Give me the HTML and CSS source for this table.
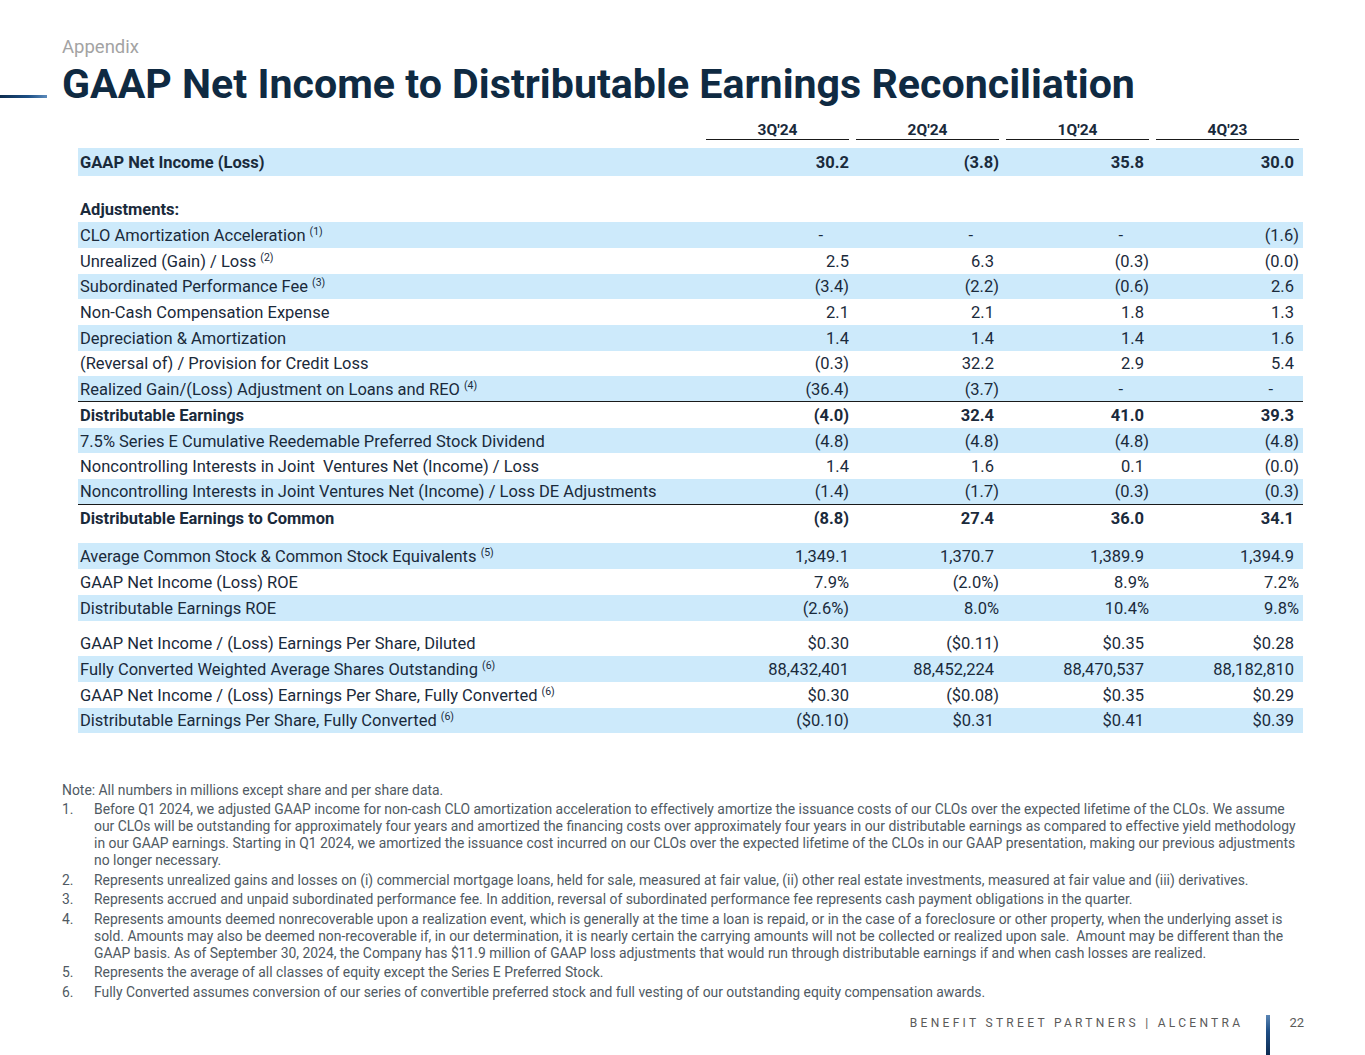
FILE: index.html
```html
<!DOCTYPE html>
<html lang="en">
<head>
<meta charset="utf-8">
<title>GAAP Net Income to Distributable Earnings Reconciliation</title>
<link rel="stylesheet" href="styles.css">
</head>
<body>
<div class="page">
  <header class="head">
    <div class="eyebrow">Appendix</div>
    <div class="title-row">
      <span class="rule"></span>
      <h1 class="title">GAAP Net Income to Distributable Earnings Reconciliation</h1>
    </div>
  </header>

  <section class="recon">
    <div class="row hdr">
      <div class="lbl"></div>
      <div class="c"><span>3Q'24</span></div>
      <div class="c"><span>2Q'24</span></div>
      <div class="c"><span>1Q'24</span></div>
      <div class="c"><span>4Q'23</span></div>
    </div>

    <div class="row blue bold first">
      <div class="lbl">GAAP Net Income (Loss)</div>
      <div class="c">30.2</div><div class="c">(3.8)</div><div class="c pos">35.8</div><div class="c pos">30.0</div>
    </div>

    <div class="row bold adj">
      <div class="lbl">Adjustments:</div>
      <div class="c"></div><div class="c"></div><div class="c"></div><div class="c"></div>
    </div>

    <div class="row blue">
      <div class="lbl">CLO Amortization Acceleration <sup>(1)</sup></div>
      <div class="c dash">-</div><div class="c dash">-</div><div class="c dash">-</div><div class="c">(1.6)</div>
    </div>
    <div class="row">
      <div class="lbl">Unrealized (Gain) / Loss <sup>(2)</sup></div>
      <div class="c">2.5</div><div class="c pos">6.3</div><div class="c">(0.3)</div><div class="c">(0.0)</div>
    </div>
    <div class="row blue">
      <div class="lbl">Subordinated Performance Fee <sup>(3)</sup></div>
      <div class="c">(3.4)</div><div class="c">(2.2)</div><div class="c">(0.6)</div><div class="c pos">2.6</div>
    </div>
    <div class="row">
      <div class="lbl">Non-Cash Compensation Expense</div>
      <div class="c">2.1</div><div class="c pos">2.1</div><div class="c pos">1.8</div><div class="c pos">1.3</div>
    </div>
    <div class="row blue">
      <div class="lbl">Depreciation &amp; Amortization</div>
      <div class="c">1.4</div><div class="c pos">1.4</div><div class="c pos">1.4</div><div class="c pos">1.6</div>
    </div>
    <div class="row">
      <div class="lbl">(Reversal of) / Provision for Credit Loss</div>
      <div class="c">(0.3)</div><div class="c pos">32.2</div><div class="c pos">2.9</div><div class="c pos">5.4</div>
    </div>
    <div class="row blue ruled">
      <div class="lbl">Realized Gain/(Loss) Adjustment on Loans and REO <sup>(4)</sup></div>
      <div class="c">(36.4)</div><div class="c">(3.7)</div><div class="c dash">-</div><div class="c dash">-</div>
    </div>
    <div class="row bold">
      <div class="lbl">Distributable Earnings</div>
      <div class="c">(4.0)</div><div class="c pos">32.4</div><div class="c pos">41.0</div><div class="c pos">39.3</div>
    </div>
    <div class="row blue">
      <div class="lbl">7.5% Series E Cumulative Reedemable Preferred Stock Dividend</div>
      <div class="c">(4.8)</div><div class="c">(4.8)</div><div class="c">(4.8)</div><div class="c">(4.8)</div>
    </div>
    <div class="row">
      <div class="lbl">Noncontrolling Interests in Joint&nbsp; Ventures Net (Income) / Loss</div>
      <div class="c">1.4</div><div class="c pos">1.6</div><div class="c pos">0.1</div><div class="c">(0.0)</div>
    </div>
    <div class="row blue ruled">
      <div class="lbl">Noncontrolling Interests in Joint Ventures Net (Income) / Loss DE Adjustments</div>
      <div class="c">(1.4)</div><div class="c">(1.7)</div><div class="c">(0.3)</div><div class="c">(0.3)</div>
    </div>
    <div class="row bold gap-a">
      <div class="lbl">Distributable Earnings to Common</div>
      <div class="c">(8.8)</div><div class="c pos">27.4</div><div class="c pos">36.0</div><div class="c pos">34.1</div>
    </div>

    <div class="row blue">
      <div class="lbl">Average Common Stock &amp; Common Stock Equivalents <sup>(5)</sup></div>
      <div class="c">1,349.1</div><div class="c pos">1,370.7</div><div class="c pos">1,389.9</div><div class="c pos">1,394.9</div>
    </div>
    <div class="row">
      <div class="lbl">GAAP Net Income (Loss) ROE</div>
      <div class="c">7.9%</div><div class="c">(2.0%)</div><div class="c">8.9%</div><div class="c">7.2%</div>
    </div>
    <div class="row blue gap-b">
      <div class="lbl">Distributable Earnings ROE</div>
      <div class="c">(2.6%)</div><div class="c">8.0%</div><div class="c">10.4%</div><div class="c">9.8%</div>
    </div>

    <div class="row">
      <div class="lbl">GAAP Net Income / (Loss) Earnings Per Share, Diluted</div>
      <div class="c">$0.30</div><div class="c">($0.11)</div><div class="c pos">$0.35</div><div class="c pos">$0.28</div>
    </div>
    <div class="row blue">
      <div class="lbl">Fully Converted Weighted Average Shares Outstanding <sup>(6)</sup></div>
      <div class="c">88,432,401</div><div class="c pos">88,452,224</div><div class="c pos">88,470,537</div><div class="c pos">88,182,810</div>
    </div>
    <div class="row">
      <div class="lbl">GAAP Net Income / (Loss) Earnings Per Share, Fully Converted <sup>(6)</sup></div>
      <div class="c">$0.30</div><div class="c">($0.08)</div><div class="c pos">$0.35</div><div class="c pos">$0.29</div>
    </div>
    <div class="row blue">
      <div class="lbl">Distributable Earnings Per Share, Fully Converted <sup>(6)</sup></div>
      <div class="c">($0.10)</div><div class="c pos">$0.31</div><div class="c pos">$0.41</div><div class="c pos">$0.39</div>
    </div>
  </section>

  <section class="notes">
    <p class="note">Note: All numbers in millions except share and per share data.</p>
    <ol class="fn">
      <li><span class="n">1.</span><span class="t">Before Q1 2024, we adjusted GAAP income for non-cash CLO amortization acceleration to effectively amortize the issuance costs of our CLOs over the expected lifetime of the CLOs. We assume our CLOs will be outstanding for approximately four years and amortized the financing costs over approximately four years in our distributable earnings as compared to effective yield methodology in our GAAP earnings. Starting in Q1 2024, we amortized the issuance cost incurred on our CLOs over the expected lifetime of the CLOs in our GAAP presentation, making our previous adjustments no longer necessary.</span></li>
      <li><span class="n">2.</span><span class="t">Represents unrealized gains and losses on (i) commercial mortgage loans, held for sale, measured at fair value, (ii) other real estate investments, measured at fair value and (iii) derivatives.</span></li>
      <li><span class="n">3.</span><span class="t">Represents accrued and unpaid subordinated performance fee. In addition, reversal of subordinated performance fee represents cash payment obligations in the quarter.</span></li>
      <li><span class="n">4.</span><span class="t">Represents amounts deemed nonrecoverable upon a realization event, which is generally at the time a loan is repaid, or in the case of a foreclosure or other property, when the underlying asset is sold. Amounts may also be deemed non-recoverable if, in our determination, it is nearly certain the carrying amounts will not be collected or realized upon sale.&nbsp; Amount may be different than the GAAP basis. As of September 30, 2024, the Company has $11.9 million of GAAP loss adjustments that would run through distributable earnings if and when cash losses are realized.</span></li>
      <li><span class="n">5.</span><span class="t">Represents the average of all classes of equity except the Series E Preferred Stock.</span></li>
      <li><span class="n">6.</span><span class="t">Fully Converted assumes conversion of our series of convertible preferred stock and full vesting of our outstanding equity compensation awards.</span></li>
    </ol>
  </section>

  <footer class="foot">
    <span class="brand">BENEFIT STREET PARTNERS | ALCENTRA</span>
    <span class="bar"></span>
    <span class="pg">22</span>
  </footer>
</div>
</body>
</html>
```

FILE: styles.css
```css
* { box-sizing: border-box; }
html, body { margin: 0; padding: 0; background: #ffffff; }
body { font-family: Roboto, "Liberation Sans", Arial, sans-serif; color: #1a2a3b; }

.page {
  width: 1365px;
  height: 1055px;
  overflow: hidden;
  display: flex;
  flex-direction: column;
}

/* Header */
.head { padding-top: 36px; }
.eyebrow {
  padding-left: 62px;
  font-size: 18.5px;
  line-height: 22px;
  color: #a3a3a3;
}
.title-row {
  display: flex;
  align-items: flex-end;
  gap: 15px;
  margin-top: 2px;
}
.rule {
  width: 47px;
  height: 3px;
  margin-bottom: 10px;
  background: linear-gradient(90deg, #0e2d4f 0%, #1c4f85 60%, #5d8cbc 100%);
  flex: none;
}
.title {
  margin: 0;
  font-size: 41.15px;
  line-height: 48px;
  font-weight: 700;
  color: #0f2a42;
  letter-spacing: 0;
}

/* Table */
.recon {
  margin-top: 10px;
  margin-left: 78px;
  width: 1225px;
  font-size: 16.5px;
}
.row {
  display: grid;
  grid-template-columns: 621px 150px 150px 150px 150px;
  height: 25.7px;
  align-items: center;
  padding-right: 4px;
  padding-top: 1px;
}
.row .lbl { padding-left: 2px; white-space: nowrap; }
.row .c { text-align: right; white-space: nowrap; }
.row .c.pos { padding-right: 5px; }
.row .c.dash { padding-right: 26px; }
.blue { background: #cdeafb; }
.bold { font-weight: 700; }
.ruled { border-bottom: 1px solid #1a1a1a; }
.gap-a { margin-bottom: 13px; }
.gap-b { margin-bottom: 10px; }

.row.hdr { height: 22px; margin-bottom: 8px; font-size: 15.5px; font-weight: 700; padding-top: 0; align-items: stretch; }
.row.hdr .c { padding-left: 7px; height: 22px; }
.row.hdr .c span {
  display: block;
  text-align: center;
  border-bottom: 1.5px solid #1a1a1a;
  height: 22px;
  padding-top: 4px;
  line-height: 17px;
}
.row.first { height: 27.5px; }
.row.adj { margin-top: 21px; }

sup {
  font-size: 10.5px;
  line-height: 0;
  vertical-align: 6px;
}

/* Notes */
.notes {
  margin-top: 49px;
  padding-left: 62px;
  padding-right: 58px;
  font-size: 13.9px;
  line-height: 17px;
  color: #505a63;
}
.note { margin: 0 0 2px 0; }
.fn { list-style: none; margin: 0; padding: 0; }
.fn li { display: flex; margin-bottom: 2.5px; }
.fn .n { width: 32px; flex: none; }
.fn .t { flex: 1; }

/* Footer */
.foot {
  margin-top: auto;
  height: 40px;
  display: flex;
  align-items: flex-start;
  justify-content: flex-end;
  padding-right: 61px;
  color: #5a5a5a;
}
.brand {
  font-size: 12px;
  letter-spacing: 3.3px;
  line-height: 16px;
  margin-right: 23px;
}
.bar {
  width: 4px;
  height: 40px;
  align-self: flex-end;
  background: linear-gradient(180deg, #5b86b5 0%, #1f4f86 40%, #0d2c52 100%);
}
.pg {
  margin-left: 19px;
  font-size: 13px;
  line-height: 16px;
}
```
